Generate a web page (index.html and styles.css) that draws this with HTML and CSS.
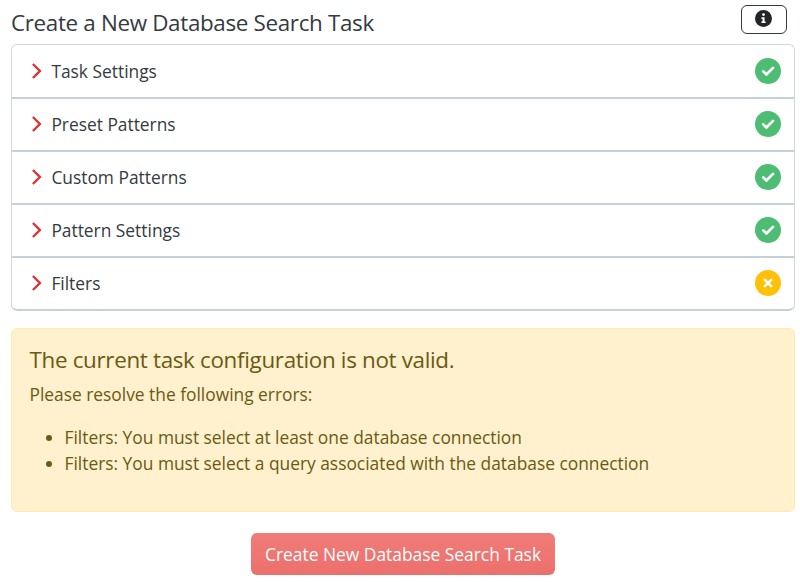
FILE: index.html
```html
<!DOCTYPE html>
<html lang="en">
  <head>
    <meta charset="UTF-8" />
    <title>Create a New Database Search Task</title>
    <link rel="stylesheet" href="styles.css">
  </head>

  <body>
    <svg class="symbols">
      <symbol id="chevron" viewBox="0 0 12 18">
        <path d="M1.9 2l7 7-7 7" fill="none" stroke="#dc3238" stroke-width="2.4" />
      </symbol>
      <symbol id="check" viewBox="0 0 26 26">
        <circle cx="13" cy="13" r="13" fill="#4dbd74" />
        <path d="M8.3 13.4l3.1 3.1 6.6-6.6" fill="none" stroke="#fff" stroke-width="2.7" stroke-linecap="round" stroke-linejoin="round" />
      </symbol>
      <symbol id="cross" viewBox="0 0 26 26">
        <circle cx="13" cy="13" r="13" fill="#ffc107" />
        <path d="M9.8 9.8l6.4 6.4M16.2 9.8l-6.4 6.4" fill="none" stroke="#fff" stroke-width="2.6" stroke-linecap="round" />
      </symbol>
    </svg>

    <div class="header">
      <h1 class="title">Create a New Database Search Task</h1>
      <button class="info-button">
        <svg width="17" height="17" viewBox="0 0 17 17">
          <circle cx="8.5" cy="8.5" r="8.5" fill="#212529" />
          <circle cx="8.5" cy="4.6" r="1.4" fill="#fff" />
          <path d="M6.5 7.2h3.1v4.2h1v1.7h-4.2v-1.7h1.1v-2.5h-1z" fill="#fff" />
        </svg>
      </button>
    </div>

    <div class="accordion">
      <div class="item">
        <svg class="chevron"><use href="#chevron" /></svg>
        <span>Task Settings</span>
        <svg class="status"><use href="#check" /></svg>
      </div>
      <div class="item">
        <svg class="chevron"><use href="#chevron" /></svg>
        <span>Preset Patterns</span>
        <svg class="status"><use href="#check" /></svg>
      </div>
      <div class="item">
        <svg class="chevron"><use href="#chevron" /></svg>
        <span>Custom Patterns</span>
        <svg class="status"><use href="#check" /></svg>
      </div>
      <div class="item">
        <svg class="chevron"><use href="#chevron" /></svg>
        <span>Pattern Settings</span>
        <svg class="status"><use href="#check" /></svg>
      </div>
      <div class="item">
        <svg class="chevron"><use href="#chevron" /></svg>
        <span>Filters</span>
        <svg class="status"><use href="#cross" /></svg>
      </div>
    </div>

    <div class="alert">
      <h2 class="alert-title">The current task configuration is not valid.</h2>
      <p class="alert-text">Please resolve the following errors:</p>
      <ul class="errors">
        <li>Filters: You must select at least one database connection</li>
        <li>Filters: You must select a query associated with the database connection</li>
      </ul>
    </div>

    <button class="create-button" disabled>Create New Database Search Task</button>
  </body>
</html>
```
FILE: styles.css
```css
* {
  box-sizing: border-box;
}

body {
  margin: 0;
  padding: 4px 5px 0 11px;
  background: #fff;
  color: #343a40;
  font-family: "Open Sans", sans-serif;
  font-size: 17.38px;
}

.symbols {
  display: none;
}

.header {
  display: flex;
  justify-content: space-between;
  height: 40px;
  padding-right: 8px;
}

.title {
  margin: 0;
  font-size: 22.4px;
  font-weight: 400;
  letter-spacing: -0.33px;
  line-height: 38px;
}

.info-button {
  display: flex;
  align-items: center;
  justify-content: center;
  width: 46px;
  height: 29px;
  margin-top: 0.5px;
  padding: 0 1px 1px 0;
  border: 1px solid #343a40;
  border-radius: 6px;
  background: #fff;
}

.accordion {
  padding-top: 1px;
  border: 1px solid #cfd8dd;
  border-bottom: none;
  border-radius: 6px;
}

.item {
  display: flex;
  align-items: center;
  height: 53px;
  padding: 0 13.5px 1px 19.4px;
  border-bottom: 2px solid #c5d0d7;
}

.item:last-child {
  border-radius: 0 0 6px 6px;
}

.chevron {
  width: 12px;
  height: 18px;
  margin-right: 8px;
}

.status {
  width: 26px;
  height: 26px;
  margin-bottom: 1px;
  margin-left: auto;
}

.alert {
  height: 184px;
  margin-top: 17px;
  padding: 11px 17.5px;
  border: 1px solid #ffeab0;
  border-radius: 6px;
  background: #fff1cd;
  color: #6b5914;
}

.alert-title {
  margin: 0;
  font-size: 22.4px;
  font-weight: 400;
  letter-spacing: -0.32px;
  line-height: 40px;
}

.alert-text {
  margin: 1px 0 17px;
  line-height: 26px;
}

.errors {
  margin: 0;
  padding-left: 35px;
  line-height: 26px;
}

.create-button {
  display: block;
  width: 304px;
  height: 42px;
  margin: 21px auto 0;
  padding: 0 0 1px;
  border: none;
  border-radius: 6px;
  background: linear-gradient(#f07c79, #ec706c);
  color: #fff;
  font-family: inherit;
  font-size: 17.4px;
}
```
